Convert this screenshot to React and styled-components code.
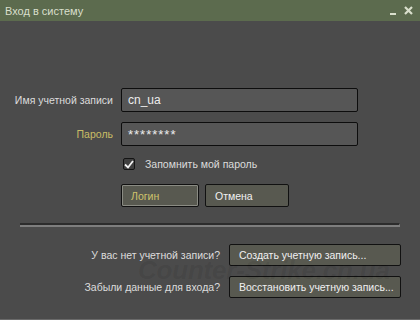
import styled, { createGlobalStyle } from "styled-components";

const GlobalStyle = createGlobalStyle`
  body {
    margin: 0;
    background: #4b4b4b;
    font-family: "Liberation Sans", Arial, sans-serif;
  }
`;

const Window = styled.div`
  position: relative;
  width: 420px;
  height: 320px;
  box-sizing: border-box;
  background: #4b4b4b;
  border-bottom: 1px solid #6a6a6a;
  display: flex;
  flex-direction: column;
  overflow: hidden;
`;

const TitleBar = styled.div`
  height: 21px;
  flex: none;
  background: #5c6b4e;
  display: flex;
  align-items: center;
  justify-content: space-between;
  padding: 0 7px 0 5px;
  color: #d9dfcc;
  font-size: 11px;
`;

const TitleButtons = styled.div`
  display: flex;
  align-items: center;
  gap: 8px;
`;

const Body = styled.div`
  padding-top: 67px;
  display: flex;
  flex-direction: column;
`;

const FormGrid = styled.div`
  display: grid;
  grid-template-columns: 113px 237px;
  column-gap: 8px;
  row-gap: 10px;
  align-items: center;
`;

const Label = styled.label`
  text-align: right;
  font-size: 10.5px;
  white-space: nowrap;
  color: ${(p) => (p.$active ? "#c9bd66" : "#dcdcdc")};
`;

const Input = styled.div`
  height: 24px;
  box-sizing: border-box;
  border: 1px solid #0d0d0d;
  border-radius: 2px;
  background: #565656;
  color: #ececec;
  font-size: ${(p) => (p.$secret ? 13 : 12)}px;
  letter-spacing: ${(p) => (p.$secret ? 1 : 0)}px;
  padding-left: 6px;
  display: flex;
  align-items: center;
`;

const CheckRow = styled.div`
  display: flex;
  align-items: center;
  gap: 10px;
  margin: 12px 0 0 123px;
  color: #dcdcdc;
  font-size: 10.5px;
`;

const Box = styled.span`
  width: 12px;
  height: 12px;
  box-sizing: border-box;
  border: 1px solid #141414;
  border-radius: 2px;
  background: #3f3f3f;
  display: flex;
  align-items: center;
  justify-content: center;
`;

const ButtonRow = styled.div`
  display: flex;
  gap: 6px;
  margin: 14px 0 0 121px;
`;

const Button = styled.button`
  height: ${(p) => p.$h || 23}px;
  width: ${(p) => p.$w}px;
  box-sizing: border-box;
  border: 1px solid #111;
  border-radius: 2px;
  background: #585950;
  color: ${(p) => (p.$default ? "#cfc36b" : "#f0f0f0")};
  box-shadow: ${(p) => (p.$default ? "inset 0 0 0 1px #8a8b83" : "none")};
  font-family: "Liberation Sans", Arial, sans-serif;
  font-size: 10.5px;
  white-space: nowrap;
  text-align: left;
  padding: 0 0 0 9px;
`;

const Separator = styled.div`
  margin: 16px 20px 0 20px;
  height: 0;
  border-top: 2px solid #2c2c2c;
  border-bottom: 2px solid #7e7e7e;
  border-right: 1px solid #7e7e7e;
`;

const LinkGrid = styled.div`
  display: grid;
  grid-template-columns: 220px 172px;
  column-gap: 9px;
  row-gap: 10px;
  align-items: center;
  margin-top: 17px;
`;

const Watermark = styled.div`
  position: absolute;
  left: 138px;
  top: 255px;
  font-size: 26px;
  font-weight: bold;
  font-style: italic;
  letter-spacing: -0.2px;
  color: rgba(0, 0, 0, 0.08);
  pointer-events: none;
  white-space: nowrap;
`;

export default function App() {
  return (
    <>
      <GlobalStyle />
      <Window>
        <TitleBar>
          <span>Вход в систему</span>
          <TitleButtons>
            <svg width="6" height="8" viewBox="0 0 6 8">
              <rect x="0" y="6" width="6" height="2" fill="#d9dfcc" />
            </svg>
            <svg width="9" height="9" viewBox="0 0 9 9">
              <path d="M1 1 L8 8 M8 1 L1 8" stroke="#d9dfcc" strokeWidth="2.2" />
            </svg>
          </TitleButtons>
        </TitleBar>
        <Body>
          <FormGrid>
            <Label>Имя учетной записи</Label>
            <Input>cn_ua</Input>
            <Label $active>Пароль</Label>
            <Input $secret>********</Input>
          </FormGrid>
          <CheckRow>
            <Box>
              <svg width="10" height="9" viewBox="0 0 10 9">
                <path d="M1 4.5 L4 7.5 L9 1" fill="none" stroke="#f2f2f2" strokeWidth="1.8" />
              </svg>
            </Box>
            <span>Запомнить мой пароль</span>
          </CheckRow>
          <ButtonRow>
            <Button $w={78} $default>Логин</Button>
            <Button $w={84}>Отмена</Button>
          </ButtonRow>
          <Separator />
          <LinkGrid>
            <Label>У вас нет учетной записи?</Label>
            <Button $w={172} $h={22}>Создать учетную запись...</Button>
            <Label>Забыли данные для входа?</Label>
            <Button $w={172} $h={22}>Восстановить учетную запись...</Button>
          </LinkGrid>
        </Body>
        <Watermark>Counter-Strike.cn.ua</Watermark>
      </Window>
    </>
  );
}
